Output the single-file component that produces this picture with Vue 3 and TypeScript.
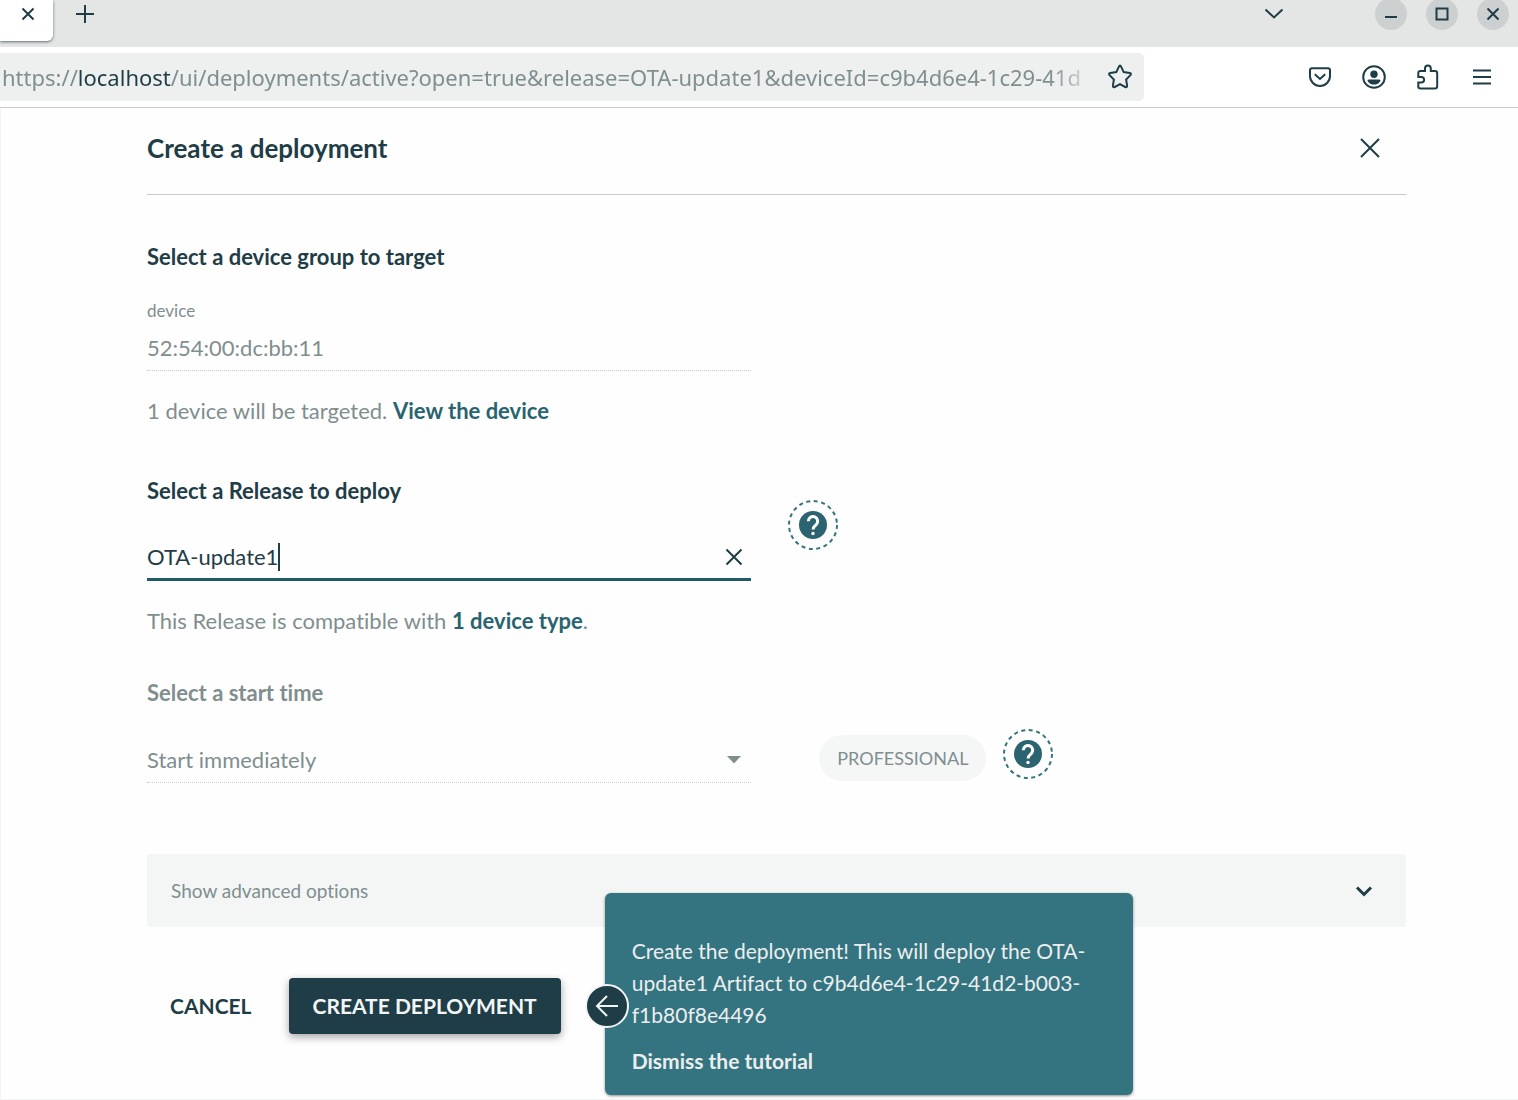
<script setup lang="ts">
import { ref } from 'vue'

const url = {
  scheme: 'https://',
  host: 'localhost',
  path: '/ui/deployments/active?open=true&release=OTA-update1&deviceId=c9b4d6e4-1c29-41d',
}
const device = ref('52:54:00:dc:bb:11')
const release = ref('OTA-update1')
const startTime = ref('now')
const deviceId = 'c9b4d6e4-1c29-41d2-b003-f1b80f8e4496'
</script>

<template>
  <div class="window">
    <header class="browser">
      <div class="tab-bar">
        <div class="tab">
          <button class="icon-button" type="button" aria-label="Close tab">
            <svg width="14" height="14" viewBox="0 0 14 14"><path d="M1.500 1.500l11 11M12.500 1.500l-11 11" /></svg>
          </button>
        </div>
        <button class="icon-button new-tab" type="button" aria-label="New tab">
          <svg width="20" height="20" viewBox="0 0 20 20"><path d="M10 1v18M1 10h18" /></svg>
        </button>
        <button class="icon-button all-tabs" type="button" aria-label="List all tabs">
          <svg width="20" height="20" viewBox="0 0 20 20"><path d="M1.500 5.500L10 13.500l8.500-8" /></svg>
        </button>
        <div class="window-controls">
          <button class="control" type="button" aria-label="Minimize">
            <svg width="16" height="16" viewBox="0 0 16 16"><path d="M2 11h12" /></svg>
          </button>
          <button class="control" type="button" aria-label="Maximize">
            <svg width="16" height="16" viewBox="0 0 16 16"><path d="M2.500 2.500h11v11h-11z" /></svg>
          </button>
          <button class="control" type="button" aria-label="Close">
            <svg width="16" height="16" viewBox="0 0 16 16"><path d="M2.500 2.500l11 11M13.500 2.500l-11 11" /></svg>
          </button>
        </div>
      </div>
      <div class="toolbar">
        <div class="url-bar">
          <div class="url" role="textbox" aria-label="Address" contenteditable="true" spellcheck="false">{{ url.scheme }}<span class="host">{{ url.host }}</span>{{ url.path }}</div>
          <button class="icon-button star" type="button" aria-label="Bookmark this page">
            <svg width="26" height="26" viewBox="0 0 26 26">
              <path d="M11.900 2.600q1.100-2 2.200 0l2.600 5.500 6 .9q2.100.5.700 2.200l-4.300 4.300 1 6q.1 2.200-1.900 1.500L13 20.200 7.800 23q-2 .7-1.900-1.500l1-6-4.300-4.300Q1.200 9.500 3.300 9l6-.9z" />
            </svg>
          </button>
        </div>
        <nav class="tools">
          <button class="icon-button" type="button" aria-label="Save to Pocket">
            <svg width="24" height="24" viewBox="0 0 24 24">
              <path d="M4 3.200h16q2 0 2 2V11a10 10 0 0 1-20 0V5.200q0-2 2-2z" /><path d="M6.800 9.300L12 14l5.200-4.700" />
            </svg>
          </button>
          <button class="icon-button" type="button" aria-label="Account">
            <svg width="24" height="24" viewBox="0 0 24 24">
              <circle cx="12" cy="12" r="10.800" /><circle class="solid" cx="12" cy="9.200" r="3.700" />
              <path class="solid" d="M7 14.500h10q1.800 0 1.400 1.500a7.500 7.500 0 0 1-12.800 0q-.4-1.500 1.400-1.500z" />
            </svg>
          </button>
          <button class="icon-button" type="button" aria-label="Extensions">
            <svg width="24" height="26" viewBox="0 0 24 26">
              <path d="M9 7V4.500a2.900 2.900 0 0 1 5.800 0V7H19q2.200 0 2.200 2.200v13q0 2.200-2.200 2.200H4.500q-2.200 0-2.200-2.200v-3.700h3a2.800 2.800 0 0 0 0-5.600h-3V9.200Q2.300 7 4.500 7z" />
            </svg>
          </button>
          <button class="icon-button" type="button" aria-label="Open application menu">
            <svg width="24" height="24" viewBox="0 0 24 24"><path d="M3 5.500h18M3 12h18M3 18.500h18" /></svg>
          </button>
        </nav>
      </div>
    </header>

    <main class="drawer">
      <div class="drawer-header">
        <h1>Create a deployment</h1>
        <button class="icon-button" type="button" aria-label="Close drawer">
          <svg width="22" height="22" viewBox="0 0 22 22"><path d="M2 2l18 18M20 2L2 20" /></svg>
        </button>
      </div>

      <form @submit.prevent>
        <section class="row">
          <div class="column">
            <h2>Select a device group to target</h2>
            <label class="field-label" for="device">device</label>
            <div class="field readonly">
              <input id="device" v-model="device" type="text" disabled />
            </div>
            <p class="helper">1 device will be targeted. <a href="#device">View the device</a></p>
          </div>
        </section>

        <section class="row second">
          <div class="column">
            <h2 id="release-title">Select a Release to deploy</h2>
            <div class="field focused">
              <input id="release" v-model="release" class="release" type="text" aria-labelledby="release-title" />
              <span class="caret"></span>
              <button class="icon-button clear" type="button" aria-label="Clear" @click="release = ''">
                <svg width="18" height="18" viewBox="0 0 18 18"><path d="M1.500 1.500l15 15M16.500 1.500l-15 15" /></svg>
              </button>
            </div>
            <p class="helper">This Release is compatible with <a href="#types">1 device type</a>.</p>
          </div>
          <button class="help" type="button" aria-label="Help on Releases">
            <svg width="50" height="50" viewBox="0 0 50 50">
              <circle class="ring" cx="25" cy="25" r="24" /><circle class="disc" cx="25" cy="25" r="14" />
              <path class="mark" d="M20.300 21.300a4.700 4.700 0 1 1 7.800 3.500c-1.700 1.500-3 2.200-3 4.700" /><circle class="dot" cx="25" cy="33.500" r="1.700" />
            </svg>
          </button>
        </section>

        <section class="row third">
          <div class="column">
            <h2 id="start-title" class="muted">Select a start time</h2>
            <div class="field readonly">
              <select id="start" v-model="startTime" aria-labelledby="start-title" disabled>
                <option value="now">Start immediately</option>
              </select>
              <svg class="arrow" width="14" height="8" viewBox="0 0 14 8"><path d="M0 0h14L7 7.500z" /></svg>
            </div>
          </div>
          <div class="plan">
            <span class="chip">PROFESSIONAL</span>
            <button class="help" type="button" aria-label="Help on scheduling">
              <svg width="50" height="50" viewBox="0 0 50 50">
                <circle class="ring" cx="25" cy="25" r="24" /><circle class="disc" cx="25" cy="25" r="14" />
                <path class="mark" d="M20.300 21.300a4.700 4.700 0 1 1 7.800 3.500c-1.700 1.500-3 2.200-3 4.700" /><circle class="dot" cx="25" cy="33.500" r="1.700" />
              </svg>
            </button>
          </div>
        </section>

        <button class="accordion" type="button" aria-expanded="false">
          <span>Show advanced options</span>
          <svg width="20" height="20" viewBox="0 0 20 20"><path d="M3 6.500l7 7 7-7" /></svg>
        </button>

        <div class="actions">
          <button class="cancel" type="button">CANCEL</button>
          <div class="submit">
            <button class="create" type="submit">CREATE DEPLOYMENT</button>
            <aside class="tip">
              <p>Create the deployment! This will deploy the OTA-update1 Artifact to {{ deviceId }}</p>
              <button class="dismiss" type="button">Dismiss the tutorial</button>
            </aside>
            <span class="pointer">
              <svg width="24" height="24" viewBox="0 0 24 24"><path d="M23 12H2M12 2L2 12l10 10" /></svg>
            </span>
          </div>
        </div>
      </form>
    </main>
  </div>
</template>

<style>
body {
  margin: 0;
  background: #fefefe;
}
</style>

<style scoped>
.window {
  --dark: #1e3d46;
  --teal: #347480;
  --muted: #7f8e8f;
  box-sizing: border-box;
  display: flex;
  flex-direction: column;
  min-height: 100vh;
  color: var(--dark);
  font-family: Lato, sans-serif;
  font-size: 22px;
  font-variant-ligatures: none;
  line-height: 32px;
}

.window *,
.window *::before {
  box-sizing: border-box;
}

button,
input,
select {
  margin: 0;
  padding: 0;
  border: 0;
  background: none;
  color: inherit;
  font: inherit;
}

h1,
h2,
p {
  margin: 0;
}

svg {
  display: block;
  flex: none;
  fill: none;
  stroke: currentColor;
  stroke-width: 2;
}

.icon-button {
  display: flex;
  align-items: center;
  justify-content: center;
  flex: none;
}

/* Browser chrome */
.tab-bar {
  display: flex;
  align-items: center;
  height: 47px;
  padding: 0 9px 19px 0;
  background: #e4e5e5;
  overflow: hidden;
}

.tab {
  display: flex;
  justify-content: flex-end;
  align-self: flex-start;
  flex: none;
  width: 53px;
  height: 41px;
  padding: 7px 18px 20px 0;
  border-radius: 0 0 6px 0;
  background: #fff;
  box-shadow: 0 1px 3px #5f6f74;
}

.new-tab {
  margin-left: 22px;
}

.all-tabs {
  margin-left: auto;
}

.window-controls {
  display: flex;
  gap: 19px;
  margin-left: 91px;
}

.control {
  display: flex;
  align-items: center;
  justify-content: center;
  width: 32px;
  height: 32px;
  border-radius: 50%;
  background: #cdd0d1;
}

.toolbar {
  display: flex;
  align-items: center;
  height: 61px;
  padding: 6px 24px 6px 0;
  border-bottom: 1px solid #c9cdce;
  background: #fff;
}

.url-bar {
  display: flex;
  align-items: center;
  flex: 1;
  min-width: 0;
  height: 48px;
  padding-right: 11px;
  border-radius: 0 5px 5px 0;
  background: #eeefef;
}

.url {
  flex: 1;
  min-width: 0;
  padding-left: 2px;
  overflow: hidden;
  color: var(--muted);
  font-family: "Noto Sans", sans-serif;
  white-space: nowrap;
  mask-image: linear-gradient(to left, transparent, #000 48px);
}

.host {
  color: var(--dark);
}

.star {
  margin-left: 10px;
}

.tools {
  display: flex;
  align-items: center;
  gap: 30px;
  margin-left: 164px;
}

.solid {
  fill: currentColor;
  stroke: none;
}

/* Drawer */
.drawer {
  flex: 1;
  padding: 0 112px 65px 146px;
  border: solid #f2f3f3;
  border-width: 0 0 1px 1px;
}

.drawer-header {
  display: flex;
  align-items: center;
  justify-content: space-between;
  height: 87px;
  padding: 0 25px 6px 0;
  border-bottom: 1px solid #c6cacb;
}

h1 {
  font-size: 26px;
  font-weight: 700;
}

h2 {
  font-size: 22px;
  font-weight: 700;
  margin-bottom: 26px;
}

.muted {
  color: var(--muted);
}

form {
  padding-top: 46px;
}

.row {
  display: flex;
  align-items: flex-start;
}

.second {
  margin-top: 48px;
}

.third {
  margin-top: 40px;
}

.column {
  width: 48%;
}

.field-label {
  display: block;
  color: var(--muted);
  font-size: 17px;
  line-height: 24px;
}

.field {
  display: flex;
  align-items: center;
  height: 48px;
  padding-top: 3px;
}

.field input,
.field select {
  height: 32px;
  outline: none;
}

.readonly {
  border-bottom: 1px dotted #c6cacb;
  color: var(--muted);
}

.readonly input,
.readonly select {
  flex: 1;
  min-width: 0;
  appearance: none;
  color: inherit;
  opacity: 1;
}

.focused {
  border-bottom: 3px solid #1f5c68;
}

.release {
  field-sizing: content;
  caret-color: transparent;
}

.caret {
  width: 2px;
  height: 28px;
  background: var(--dark);
}

.clear {
  margin-right: 8px;
  margin-left: auto;
}

.arrow {
  margin-right: 10px;
  fill: currentColor;
  stroke: none;
}

.helper {
  margin-top: 24px;
  color: var(--muted);
}

.helper a {
  color: #286370;
  font-weight: 700;
  text-decoration: none;
}

.help {
  flex: none;
  color: var(--teal);
}

.second .help {
  margin: 25px 0 0 37px;
}

.ring {
  stroke-dasharray: 4 3.54;
}

.disc {
  fill: #2b6470;
  stroke: none;
}

.mark {
  stroke: #fff;
  stroke-width: 3;
}

.dot {
  fill: #fff;
  stroke: none;
}

.plan {
  display: flex;
  align-items: flex-start;
  gap: 17px;
  margin: 52px 0 0 68px;
}

.chip {
  margin-top: 6px;
  padding: 7px 18px;
  border-radius: 23px;
  background: #f5f7f7;
  color: var(--muted);
  font-size: 18px;
}

.accordion {
  display: flex;
  align-items: center;
  justify-content: space-between;
  width: 100%;
  height: 73px;
  margin-top: 71px;
  padding: 0 32px 0 24px;
  border-radius: 3px;
  background: #f4f6f6;
  font-size: 19px;
}

.accordion span {
  color: var(--muted);
}

.accordion svg {
  stroke-width: 3;
}

.actions {
  display: flex;
  align-items: center;
  margin-top: 51px;
  padding-left: 23px;
}

.cancel,
.create {
  font-size: 21px;
  font-weight: 700;
}

.submit {
  position: relative;
  margin-left: 37px;
}

.create {
  height: 56px;
  padding: 0 24px;
  border-radius: 4px;
  background: var(--dark);
  box-shadow: 0 3px 8px #0000005c;
  color: #f3f5f5;
}

.tip {
  position: absolute;
  top: -85px;
  left: calc(100% + 44px);
  width: 528px;
  padding: 42px 40px 18px 27px;
  border-radius: 6px;
  background: var(--teal);
  box-shadow: 0 1px 3px #00000073;
  color: #eceeee;
  font-size: 21px;
}

.dismiss {
  display: block;
  margin-top: 14px;
  font-weight: 700;
}

.pointer {
  position: absolute;
  top: 6px;
  left: calc(100% + 24px);
  display: flex;
  align-items: center;
  justify-content: center;
  width: 44px;
  height: 44px;
  border: 2px solid #f3f5f5;
  border-radius: 50%;
  background: var(--dark);
  color: #f3f5f5;
}
</style>
